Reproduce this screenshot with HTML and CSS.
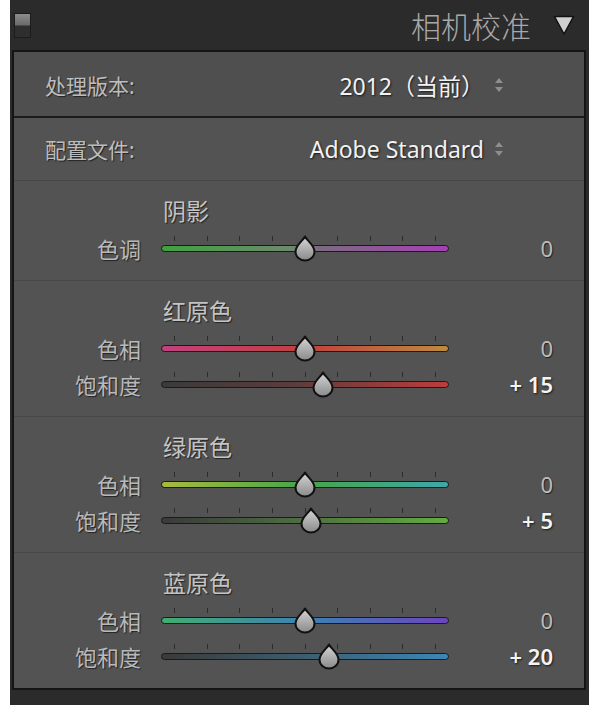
FILE: index.html
```html
<!DOCTYPE html>
<html lang="zh-CN">
<head>
    <meta charset="UTF-8">
    <title>相机校准</title>
    <link rel="stylesheet" href="styles.css">
</head>
<body>
    <div class="frame">
        <div class="header">
            <span class="toggle"></span>
            <span class="title">相机校准</span>
            <svg class="collapse" width="22" height="22" viewBox="0 0 22 22">
                <path d="M1.5 2.5 L20.5 2.5 L11 20 Z" fill="#cfcfcf" stroke="#111" stroke-width="1.5" stroke-linejoin="round"/>
            </svg>
        </div>

        <div class="panel">
            <div class="setting first">
                <span class="setting-label">处理版本:</span>
                <span class="setting-value">2012（当前）<svg class="updown" width="10" height="16" viewBox="0 0 10 16"><path d="M5 1 L9 6 L1 6 Z M5 15 L9 10 L1 10 Z" fill="#8e8e8e"/></svg></span>
            </div>
            <div class="setting">
                <span class="setting-label">配置文件:</span>
                <span class="setting-value">Adobe Standard<svg class="updown" width="10" height="16" viewBox="0 0 10 16"><path d="M5 1 L9 6 L1 6 Z M5 15 L9 10 L1 10 Z" fill="#8e8e8e"/></svg></span>
            </div>

            <!-- 阴影 -->
            <div class="group">
                <div class="group-title">阴影</div>
                <div class="row">
                    <span class="label">色调</span>
                    <div class="slider">
                        <div class="ticks"><i></i><i></i><i></i><i></i><i></i><i></i><i></i><i></i><i></i></div>
                        <div class="track tint"></div>
                        <svg class="thumb" style="left:144px" width="24" height="27" viewBox="0 0 24 27"><use href="#drop"/></svg>
                    </div>
                    <span class="value">0</span>
                </div>
            </div>

            <!-- 红原色 -->
            <div class="group">
                <div class="group-title">红原色</div>
                <div class="row">
                    <span class="label">色相</span>
                    <div class="slider">
                        <div class="ticks"><i></i><i></i><i></i><i></i><i></i><i></i><i></i><i></i><i></i></div>
                        <div class="track red-hue"></div>
                        <svg class="thumb" style="left:144px" width="24" height="27" viewBox="0 0 24 27"><use href="#drop"/></svg>
                    </div>
                    <span class="value">0</span>
                </div>
                <div class="row">
                    <span class="label">饱和度</span>
                    <div class="slider">
                        <div class="ticks"><i></i><i></i><i></i><i></i><i></i><i></i><i></i><i></i><i></i></div>
                        <div class="track red-sat"></div>
                        <svg class="thumb" style="left:162px" width="24" height="27" viewBox="0 0 24 27"><use href="#drop"/></svg>
                    </div>
                    <span class="value set">+ 15</span>
                </div>
            </div>

            <!-- 绿原色 -->
            <div class="group">
                <div class="group-title">绿原色</div>
                <div class="row">
                    <span class="label">色相</span>
                    <div class="slider">
                        <div class="ticks"><i></i><i></i><i></i><i></i><i></i><i></i><i></i><i></i><i></i></div>
                        <div class="track green-hue"></div>
                        <svg class="thumb" style="left:144px" width="24" height="27" viewBox="0 0 24 27"><use href="#drop"/></svg>
                    </div>
                    <span class="value">0</span>
                </div>
                <div class="row">
                    <span class="label">饱和度</span>
                    <div class="slider">
                        <div class="ticks"><i></i><i></i><i></i><i></i><i></i><i></i><i></i><i></i><i></i></div>
                        <div class="track green-sat"></div>
                        <svg class="thumb" style="left:150px" width="24" height="27" viewBox="0 0 24 27"><use href="#drop"/></svg>
                    </div>
                    <span class="value set">+ 5</span>
                </div>
            </div>

            <!-- 蓝原色 -->
            <div class="group">
                <div class="group-title">蓝原色</div>
                <div class="row">
                    <span class="label">色相</span>
                    <div class="slider">
                        <div class="ticks"><i></i><i></i><i></i><i></i><i></i><i></i><i></i><i></i><i></i></div>
                        <div class="track blue-hue"></div>
                        <svg class="thumb" style="left:144px" width="24" height="27" viewBox="0 0 24 27"><use href="#drop"/></svg>
                    </div>
                    <span class="value">0</span>
                </div>
                <div class="row">
                    <span class="label">饱和度</span>
                    <div class="slider">
                        <div class="ticks"><i></i><i></i><i></i><i></i><i></i><i></i><i></i><i></i><i></i></div>
                        <div class="track blue-sat"></div>
                        <svg class="thumb" style="left:168px" width="24" height="27" viewBox="0 0 24 27"><use href="#drop"/></svg>
                    </div>
                    <span class="value set">+ 20</span>
                </div>
            </div>
        </div>
        <div class="footer"></div>
    </div>

    <!-- 滑块的水滴形状 -->
    <svg width="0" height="0" class="defs">
        <defs>
            <linearGradient id="dropFill" x1="0" y1="0" x2="0" y2="1">
                <stop offset="0" stop-color="#d6d6d6"/>
                <stop offset="1" stop-color="#8a8a8a"/>
            </linearGradient>
            <path id="drop" d="M12 1.5 C13.5 5, 21.5 10.5, 21.5 16.5 C21.5 22, 17 25.5, 12 25.5 C7 25.5, 2.5 22, 2.5 16.5 C2.5 10.5, 10.5 5, 12 1.5 Z" fill="url(#dropFill)" stroke="#111" stroke-width="2" stroke-linejoin="round"/>
        </defs>
    </svg>
</body>
</html>
```

FILE: styles.css
```css
*{
    margin: 0;
    padding: 0;
    box-sizing: border-box;
}

body{
    background-color: #fff;
    font-family: "Noto Sans", "Noto Sans CJK SC", sans-serif;
}

/*外框，左右两侧留白*/
.frame{
    width: 579px;
    margin-left: 10px;
    background-color: #2b2b2b;
    padding: 0 3px 0 2px;
}

.header{
    height: 50px;
    display: flex;
    align-items: center;
    padding: 0 11px 0 2px;
}

/*左上角开关*/
.toggle{
    width: 17px;
    height: 25px;
    border: 1px solid #1c1c1c;
    background: linear-gradient(#8c8c8c 0, #6a6a6a 11px, #2e2e2e 12px, #2e2e2e 100%);
}

.title{
    margin-left: auto;
    margin-right: 22px;
    font-family: "Noto Sans CJK SC", sans-serif;
    font-size: 30px;
    font-weight: 300;
    color: #a8a8a8;
    line-height: 1;
}

.collapse{
    display: block;
}

.panel{
    border: 2px solid #151515;
    background-color: #535353;
}

/*处理版本 / 配置文件*/
.setting{
    height: 62px;
    display: flex;
    align-items: center;
    justify-content: space-between;
    padding: 0 80px 0 31px;
}

.setting.first{
    height: 66px;
    border-bottom: 2px solid #1b1b1b;
    background-color: #4f4f4f;
    padding-top: 2px;
}

.setting-label{
    font-size: 21px;
    color: #bdbdbd;
    text-shadow: 1px 1px 1px #222;
}

.setting-value{
    display: flex;
    align-items: center;
    gap: 10px;
    font-size: 23px;
    color: #f2f2f2;
    text-shadow: 1px 1px 2px #1a1a1a;
}

.updown{
    display: block;
}

/*每组滑块*/
.group{
    border-top: 1px solid #474747;
    padding: 15px 31px 14px 0;
}

.group-title{
    height: 30px;
    line-height: 30px;
    padding-left: 149px;
    margin-bottom: 4px;
    font-size: 23px;
    color: #c4c4c4;
    text-shadow: 1px 1px 1px #222;
}

.row{
    height: 36px;
    display: grid;
    grid-template-columns: 127px 288px 1fr;
    column-gap: 20px;
    align-items: center;
}

.label{
    text-align: right;
    font-size: 22px;
    color: #b9b9b9;
    text-shadow: 1px 1px 1px #222;
}

.value{
    text-align: right;
    font-size: 22px;
    color: #bcbcbc;
    text-shadow: 1px 1px 1px #222;
}

.value.set{
    color: #f4f4f4;
    font-weight: 600;
    text-shadow: 1px 1px 2px #1a1a1a;
}

.slider{
    position: relative;
    height: 26px;
    display: flex;
    flex-direction: column;
    justify-content: flex-end;
    padding-bottom: 9px;
}

.ticks{
    display: flex;
    justify-content: space-between;
    padding: 0 13px;
    margin-bottom: 4px;
}

.ticks i{
    width: 1px;
    height: 5px;
    background-color: #2c2c2c;
}

.track{
    height: 7px;
    border: 1px solid #1a1a1a;
    border-radius: 4px;
}

.tint{ background: linear-gradient(to right, #3fa23f, #6d8a6d 45%, #7c6a80 55%, #a73fb6); }
.red-hue{ background: linear-gradient(to right, #c2407e, #c0403f 50%, #c08a3a); }
.red-sat{ background: linear-gradient(to right, #3a3a3a, #5a3c3c 45%, #bf3c3c); }
.green-hue{ background: linear-gradient(to right, #a9bb3c, #45a548 50%, #3ba9ab); }
.green-sat{ background: linear-gradient(to right, #3a3a3a, #4c6a40 45%, #62ad3f); }
.blue-hue{ background: linear-gradient(to right, #3fae72, #3c82b2 50%, #6c44c0); }
.blue-sat{ background: linear-gradient(to right, #3a3a3a, #3c5a6a 45%, #3b87b8); }

/*滑块压在轨道上*/
.thumb{
    position: absolute;
    top: 0;
    margin-left: -12px;
}

.footer{
    height: 15px;
}

.defs{
    position: absolute;
}
```
